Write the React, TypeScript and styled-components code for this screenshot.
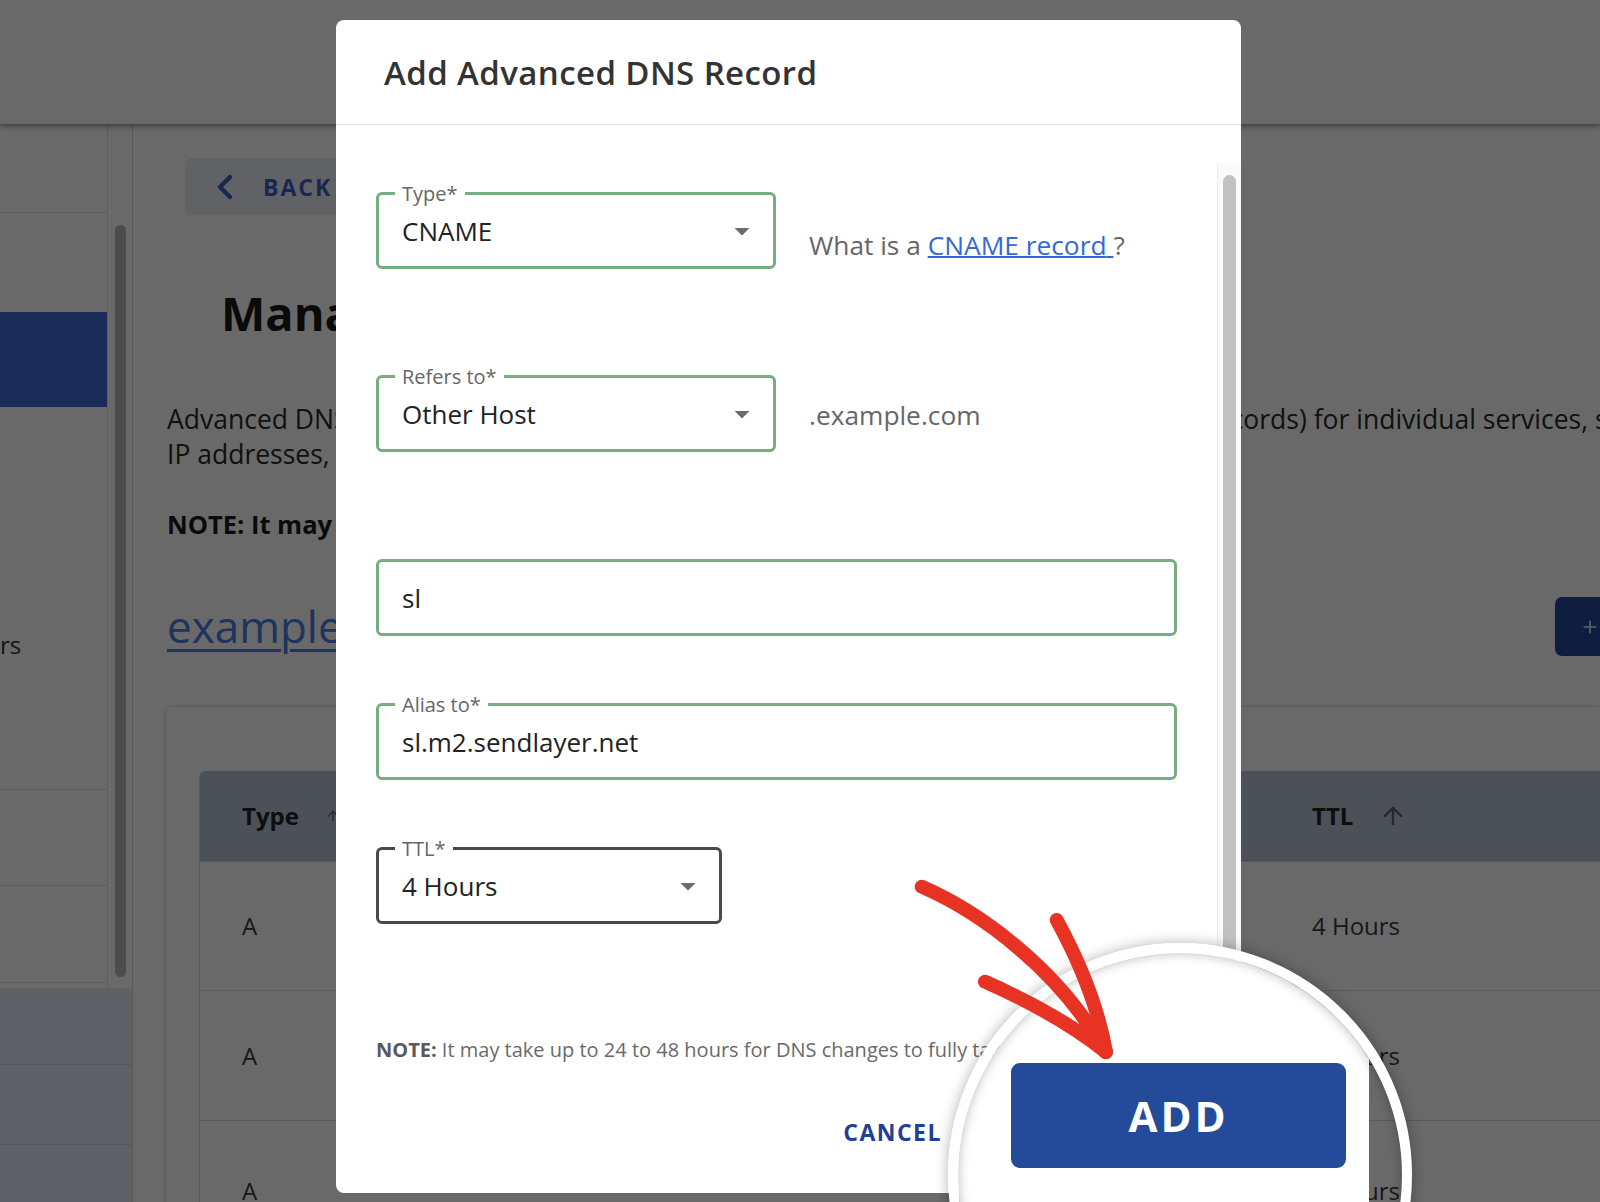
import styled, { createGlobalStyle } from 'styled-components';
import { ArrowUp, ChevronLeft, Plus } from 'lucide-react';

const GlobalStyle = createGlobalStyle`
  * {
    box-sizing: border-box;
  }
  html,
  body {
    margin: 0;
    padding: 0;
  }
  body {
    width: 1600px;
    height: 1202px;
    overflow: hidden;
    background: #ffffff;
    font-family: 'Open Sans', 'Noto Sans', Arial, sans-serif;
    color: #222222;
  }
`;

const Screen = styled.div`
  position: relative;
  width: 1600px;
  height: 1202px;
  overflow: hidden;
`;

/* ---------- page behind the dialog ---------- */

const Page = styled.div`
  position: relative;
  z-index: 0;
  display: flex;
  flex-direction: column;
  height: 100%;
  background: #ffffff;
`;

const TopBar = styled.header`
  flex: 0 0 124px;
  background: #ffffff;
  box-shadow: 0 2px 6px rgba(0, 0, 0, 0.45);
  position: relative;
  z-index: 1;
`;

const PageBody = styled.div`
  flex: 1;
  display: flex;
  min-height: 0;
`;

const Sidebar = styled.aside`
  flex: 0 0 133px;
  display: flex;
  flex-direction: column;
  border-right: 1px solid #d3d6db;
`;

const SideUpper = styled.div`
  flex: 0 0 864px;
  display: flex;
`;

const SideList = styled.div`
  width: 108px;
  display: flex;
  flex-direction: column;
  border-right: 1px solid #e0e2e5;
  overflow: hidden;
`;

const SideItem = styled.div<{ $h: number; $active?: boolean; $line?: boolean; $pad?: number }>`
  flex: 0 0 ${(p) => p.$h}px;
  padding-top: ${(p) => p.$pad ?? 0}px;
  font-size: 24px;
  line-height: 32px;
  color: #333333;
  background: ${(p) => (p.$active ? '#4069d6' : 'transparent')};
  border-bottom: ${(p) => (p.$line ? '1px solid #dadde2' : 'none')};
`;

const SideScroll = styled.div`
  flex: 1;
  padding: 101px 6px 11px 7px;
`;

const SideThumb = styled.div`
  height: 100%;
  border-radius: 6px;
  background: #b8b8b8;
`;

const SideLower = styled.div`
  flex: 1;
  display: flex;
  flex-direction: column;
  background: #e5ecf5;
`;

const SideLowerItem = styled.div<{ $h: number }>`
  flex: 0 0 ${(p) => p.$h}px;
  border-bottom: 1px solid #d2dae5;
`;

const Main = styled.main`
  flex: 1;
  min-width: 0;
  display: flex;
  flex-direction: column;
  padding-left: 34px;
  overflow: hidden;
`;

const BackButton = styled.div`
  flex: 0 0 57px;
  width: 170px;
  margin: 34px 0 0 18px;
  display: flex;
  align-items: center;
  gap: 18px;
  padding-left: 20px;
  border-radius: 6px;
  background: #eceff4;
  color: #3a62c4;
  font-size: 23px;
  font-weight: 700;
  letter-spacing: 2px;
`;

const PageTitle = styled.h1`
  margin: 70px 0 0 54px;
  font-size: 47px;
  line-height: 56px;
  font-weight: 700;
  color: #1a1a1a;
  white-space: nowrap;
`;

const Lead = styled.p`
  margin: 61px 0 0;
  font-size: 26.5px;
  line-height: 35px;
  color: #2a2a2a;
  white-space: nowrap;
`;

const LeadNote = styled.p`
  margin: 36px 0 0;
  font-size: 25.5px;
  line-height: 32px;
  font-weight: 700;
  color: #1a1a1a;
  white-space: nowrap;
`;

const DomainRow = styled.div`
  margin-top: 59px;
  display: flex;
  justify-content: space-between;
  align-items: flex-start;
`;

const DomainLink = styled.a`
  font-size: 44px;
  line-height: 54px;
  color: #4a7de6;
  text-decoration: underline;
  text-decoration-thickness: 3px;
  text-underline-offset: 6px;
`;

const AddRecordButton = styled.div`
  margin-top: -2px;
  width: 45px;
  height: 59px;
  display: flex;
  align-items: center;
  padding-left: 25px;
  border-radius: 7px 0 0 7px;
  background: #25499c;
  color: #dfe6f5;
`;

const TableCard = styled.section`
  flex: 1;
  margin: 51px 0 0 -1px;
  padding: 64px 0 0 33px;
  background: #ffffff;
  border-top-left-radius: 6px;
  box-shadow: 0 0 5px rgba(0, 0, 0, 0.22);
`;

const Table = styled.div`
  border-left: 1px solid #cfd3da;
  border-top-left-radius: 6px;
`;

const TableRow = styled.div<{ $h: number; $head?: boolean }>`
  display: grid;
  grid-template-columns: 141px 310px 619px 1fr;
  height: ${(p) => p.$h}px;
  background: ${(p) => (p.$head ? '#b8c2d3' : '#ffffff')};
  border-top-left-radius: ${(p) => (p.$head ? '6px' : '0')};
  border-bottom: 1px solid #d5d8dd;
`;

const Cell = styled.div<{ $head?: boolean; $shift?: number }>`
  display: flex;
  align-items: center;
  gap: 26px;
  padding: ${(p) => p.$shift ?? 0}px 0 0 42px;
  font-size: 24px;
  line-height: 32px;
  font-weight: ${(p) => (p.$head ? 700 : 400)};
  color: ${(p) => (p.$head ? '#222222' : '#3a3a3a')};
  white-space: nowrap;
`;

const Backdrop = styled.div`
  position: absolute;
  inset: 0;
  background: rgba(0, 0, 0, 0.59);
`;

/* ---------- dialog ---------- */

const Dialog = styled.div`
  position: absolute;
  left: 336px;
  top: 20px;
  width: 905px;
  height: 1173px;
  display: flex;
  flex-direction: column;
  background: #ffffff;
  border-radius: 8px;
  overflow: hidden;
`;

const DialogHeader = styled.div`
  flex: 0 0 105px;
  display: flex;
  align-items: center;
  padding-left: 48px;
  border-bottom: 1px solid #e3e3e3;
`;

const DialogTitle = styled.h2`
  margin: 0;
  font-size: 33px;
  font-weight: 600;
  color: #333333;
  letter-spacing: 0.4px;
`;

const DialogBody = styled.div`
  flex: 1;
  display: flex;
  min-height: 0;
`;

const Form = styled.div`
  flex: 1;
  display: flex;
  flex-direction: column;
  padding: 67px 40px 0 40px;
`;

const ScrollTrack = styled.div`
  flex: 0 0 24px;
  margin-top: 38px;
  padding: 12px 5px 0 5px;
  border-left: 1px solid #ebebeb;
  background: #fafafa;
`;

const ScrollThumb = styled.div`
  height: 880px;
  border-radius: 7px;
  background: #c1c1c1;
`;

const FieldRow = styled.div<{ $gap: number }>`
  display: flex;
  align-items: flex-start;
  margin-top: ${(p) => p.$gap}px;
`;

const Field = styled.div<{ $w: number; $dark?: boolean }>`
  position: relative;
  flex: 0 0 ${(p) => p.$w}px;
  height: 77px;
  display: flex;
  align-items: center;
  padding: 0 13px 0 23px;
  border: 3px solid ${(p) => (p.$dark ? '#4a4a4a' : '#78ad82')};
  border-radius: 6px;
  font-size: 26px;
  color: #222222;
`;

const FieldLabel = styled.span`
  position: absolute;
  top: -11px;
  left: 16px;
  padding: 0 7px;
  background: #ffffff;
  font-size: 20px;
  line-height: 20px;
  color: #666666;
`;

const FieldValue = styled.span`
  flex: 1;
`;

const Helper = styled.div<{ $top: number }>`
  margin: ${(p) => p.$top}px 0 0 33px;
  font-size: 26.3px;
  color: #666666;
  white-space: nowrap;
`;

const HelperLink = styled.a`
  color: #3569d6;
  text-decoration: underline;
  text-decoration-thickness: 2px;
`;

const Note = styled.p`
  margin: 112px 0 0;
  font-size: 20px;
  line-height: 28px;
  color: #6a6a6a;
  white-space: nowrap;

  & b {
    color: #5a5a5a;
  }
`;

const Footer = styled.div`
  margin-top: 45px;
  display: flex;
  justify-content: flex-end;
  align-items: center;
  gap: 38px;
`;

const CancelButton = styled.button`
  padding: 0;
  border: none;
  background: none;
  font-family: inherit;
  font-size: 23px;
  line-height: 32px;
  font-weight: 700;
  letter-spacing: 1.5px;
  color: #1f4096;
`;

const AddButton = styled.button<{ $big?: boolean }>`
  width: ${(p) => (p.$big ? 335 : 197)}px;
  height: ${(p) => (p.$big ? 105 : 46)}px;
  border: none;
  border-radius: ${(p) => (p.$big ? 9 : 4)}px;
  background: #244b9a;
  color: #ffffff;
  font-family: inherit;
  font-size: ${(p) => (p.$big ? 42 : 20)}px;
  font-weight: 700;
  letter-spacing: ${(p) => (p.$big ? 3 : 1)}px;
`;

/* ---------- callout: magnifier and hand-drawn arrow ---------- */

const Lens = styled.div`
  position: absolute;
  left: 948px;
  top: 943px;
  width: 464px;
  height: 464px;
  border: 10px solid #ffffff;
  border-radius: 50%;
  overflow: hidden;
  box-shadow: 0 0 14px rgba(0, 0, 0, 0.3);

  &::after {
    content: '';
    position: absolute;
    inset: 0;
    border-radius: 50%;
    box-shadow: inset 0 0 12px rgba(0, 0, 0, 0.28);
    pointer-events: none;
  }
`;

const LensView = styled.div`
  width: 411px;
  height: 100%;
  padding: 110px 0 0 53px;
  background: #ffffff;
`;

const Scribble = styled.svg`
  position: absolute;
  left: 900px;
  top: 860px;
  overflow: visible;
`;

function Caret() {
  return (
    <svg width="36" height="36" viewBox="0 0 24 24" fill="#6b6b6b">
      <path d="M7 10l5 5 5-5z" />
    </svg>
  );
}

export default function App() {
  return (
    <Screen>
      <GlobalStyle />

      <Page>
        <TopBar />
        <PageBody>
          <Sidebar>
            <SideUpper>
              <SideList>
                <SideItem $h={89} $line />
                <SideItem $h={99} />
                <SideItem $h={95} $active />
                <SideItem $h={383} $line $pad={222}>
                  rs
                </SideItem>
                <SideItem $h={96} $line />
                <SideItem $h={97} $line />
              </SideList>
              <SideScroll>
                <SideThumb />
              </SideScroll>
            </SideUpper>
            <SideLower>
              <SideLowerItem $h={77} />
              <SideLowerItem $h={80} />
            </SideLower>
          </Sidebar>

          <Main>
            <BackButton>
              <ChevronLeft size={40} strokeWidth={2.6} />
              BACK
            </BackButton>
            <PageTitle>Manage Advanced DNS</PageTitle>
            <Lead>
              Advanced DNS records let you create custom entries (A, AAAA, CNAME, MX, and TXT records) for individual services, such as
              <br />
              IP addresses, mail servers and verification tokens.
            </Lead>
            <LeadNote>NOTE: It may take up to 24 to 48 hours for DNS changes to fully take effect.</LeadNote>
            <DomainRow>
              <DomainLink>example.com</DomainLink>
              <AddRecordButton>
                <Plus size={24} strokeWidth={2} />
              </AddRecordButton>
            </DomainRow>
            <TableCard>
              <Table>
                <TableRow $h={91} $head>
                  <Cell $head>
                    Type <ArrowUp size={28} color="#5c6270" />
                  </Cell>
                  <Cell $head>Host</Cell>
                  <Cell $head>Value</Cell>
                  <Cell $head>
                    TTL <ArrowUp size={28} color="#5c6270" />
                  </Cell>
                </TableRow>
                <TableRow $h={129}>
                  <Cell>A</Cell>
                  <Cell>@</Cell>
                  <Cell>192.0.2.10</Cell>
                  <Cell>4 Hours</Cell>
                </TableRow>
                <TableRow $h={130}>
                  <Cell>A</Cell>
                  <Cell>www</Cell>
                  <Cell>192.0.2.10</Cell>
                  <Cell>4 Hours</Cell>
                </TableRow>
                <TableRow $h={140}>
                  <Cell>A</Cell>
                  <Cell $shift={44}>01498561</Cell>
                  <Cell $shift={44}>hosting</Cell>
                  <Cell>4 Hours</Cell>
                </TableRow>
              </Table>
            </TableCard>
          </Main>
        </PageBody>
      </Page>

      <Backdrop />

      <Dialog>
        <DialogHeader>
          <DialogTitle>Add Advanced DNS Record</DialogTitle>
        </DialogHeader>
        <DialogBody>
          <Form>
            <FieldRow $gap={0}>
              <Field $w={400}>
                <FieldLabel>Type*</FieldLabel>
                <FieldValue>CNAME</FieldValue>
                <Caret />
              </Field>
              <Helper $top={35}>
                What is a <HelperLink>CNAME record{'\u00a0'}</HelperLink>?
              </Helper>
            </FieldRow>

            <FieldRow $gap={106}>
              <Field $w={400}>
                <FieldLabel>Refers to*</FieldLabel>
                <FieldValue>Other Host</FieldValue>
                <Caret />
              </Field>
              <Helper $top={22}>.example.com</Helper>
            </FieldRow>

            <FieldRow $gap={107}>
              <Field $w={801}>
                <FieldValue>sl</FieldValue>
              </Field>
            </FieldRow>

            <FieldRow $gap={67}>
              <Field $w={801}>
                <FieldLabel>Alias to*</FieldLabel>
                <FieldValue>sl.m2.sendlayer.net</FieldValue>
              </Field>
            </FieldRow>

            <FieldRow $gap={67}>
              <Field $w={346} $dark>
                <FieldLabel>TTL*</FieldLabel>
                <FieldValue>4 Hours</FieldValue>
                <Caret />
              </Field>
            </FieldRow>

            <Note>
              <b>NOTE:</b> It may take up to 24 to 48 hours for DNS changes to fully take effect.
            </Note>

            <Footer>
              <CancelButton>CANCEL</CancelButton>
              <AddButton>ADD</AddButton>
            </Footer>
          </Form>
          <ScrollTrack>
            <ScrollThumb />
          </ScrollTrack>
        </DialogBody>
      </Dialog>

      <Lens>
        <LensView>
          <AddButton $big>ADD</AddButton>
        </LensView>
      </Lens>

      <Scribble width="240" height="210" viewBox="0 0 240 210">
        <g fill="none" stroke="#e63323" strokeWidth="14" strokeLinecap="round" strokeLinejoin="round">
          <path d="M21.7 26.7 C80 52, 160 110, 205 191.7" />
          <path d="M156.7 60 Q195 130 206 192" />
          <path d="M85 121.7 Q160 155 206 192" />
        </g>
      </Scribble>
    </Screen>
  );
}
